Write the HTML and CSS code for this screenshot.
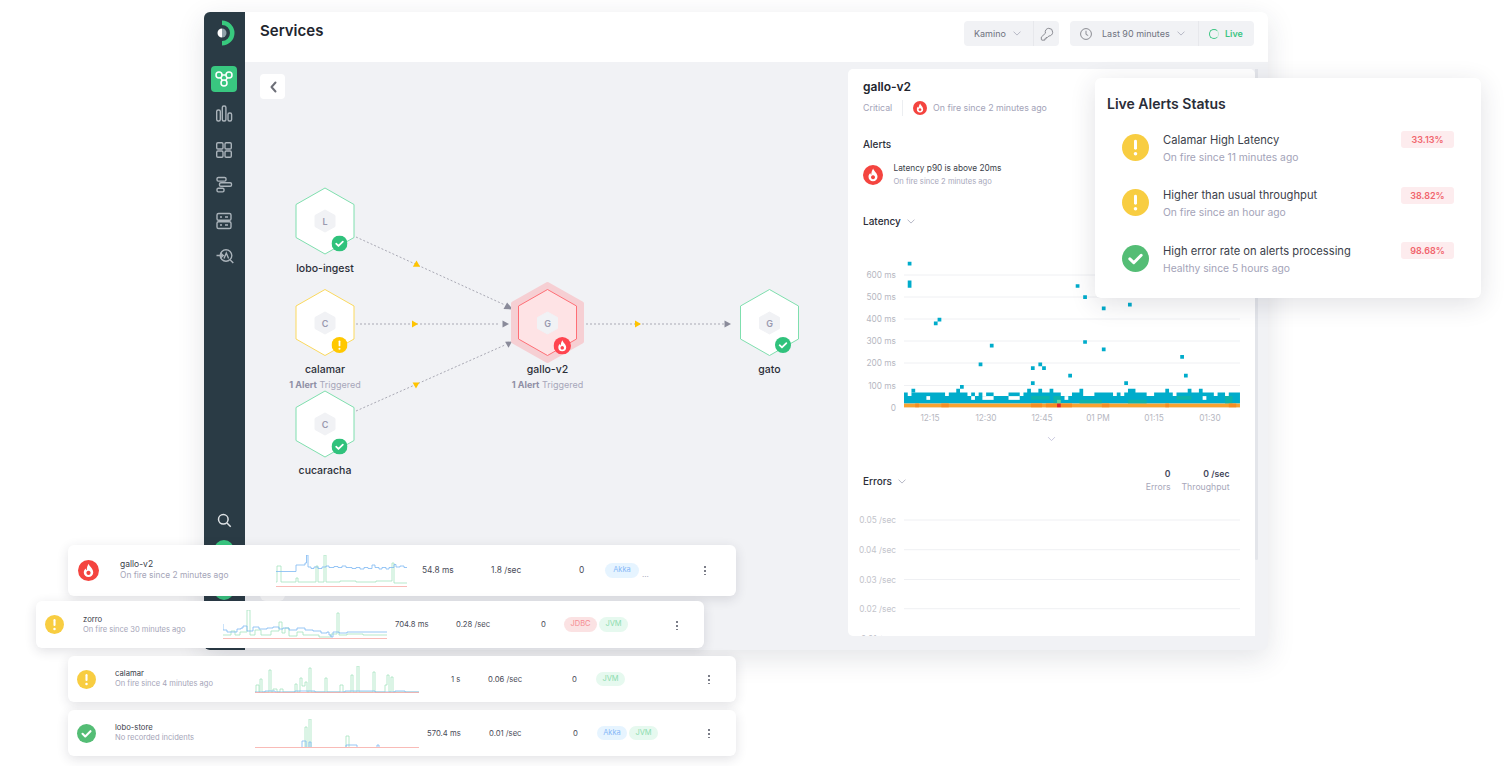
FILE: index.html
```html
<!DOCTYPE html>
<html lang="en">
<head>
<meta charset="utf-8">
<title>Services</title>
<link rel="stylesheet" href="styles.css">
</head>
<body>
<svg class="defs" width="0" height="0" aria-hidden="true">
  <defs>
    <symbol id="i-fire" viewBox="0 0 20 20"><circle cx="10" cy="10" r="10" fill="currentColor"/><path fill="#fff" fill-rule="evenodd" d="M10.200 3.600c.4 2.600 4.300 4.400 4.300 8.200a4.500 4.500 0 0 1-9 0c0-1.800.9-3 1.900-3.800.1 1 .5 1.500 1 1.700-.2-2 .6-4.400 1.800-6.100zM10 10.300a2 2 0 1 0 .01 0z"/></symbol>
    <symbol id="i-warn" viewBox="0 0 20 20"><circle cx="10" cy="10" r="10" fill="currentColor"/><rect x="8.900" y="4.300" width="2.200" height="7.400" rx="1.100" fill="#fff"/><circle cx="10" cy="14.700" r="1.300" fill="#fff"/></symbol>
    <symbol id="i-ok" viewBox="0 0 20 20"><circle cx="10" cy="10" r="10" fill="currentColor"/><path d="M5.800 10.300l2.900 2.800 5.500-5.500" fill="none" stroke="#fff" stroke-width="2.200" stroke-linecap="round" stroke-linejoin="round"/></symbol>
    <symbol id="i-chev" viewBox="0 0 10 6"><path d="M1 1l4 4 4-4" fill="none" stroke="currentColor" stroke-width="1.200" stroke-linecap="round" stroke-linejoin="round"/></symbol>
  </defs>
</svg>

<main class="stage">
  <section class="window">
    <nav class="sidebar">
      <svg class="logo" viewBox="0 0 26 26"><path d="M9 .5a12.500 12.500 0 0 1 0 25v-4.500a8 8 0 0 0 0-16z" fill="#38c97e"/><path d="M9 8.500a4.500 4.500 0 0 0 0 9z" fill="#fff"/><path d="M9 8.500a4.500 4.500 0 0 1 0 9z" fill="#8fa0a8"/></svg>
      <a class="nav-item active"><svg viewBox="0 0 26 26" class="nav-icon white"><circle cx="8" cy="9" r="3"/><circle cx="18" cy="9" r="3"/><circle cx="13" cy="17" r="3"/><path d="M11 9h4M9.500 11.600l2 3M16.500 11.600l-2 3"/></svg></a>
      <a class="nav-item"><svg viewBox="0 0 26 26" class="nav-icon"><rect x="5.700" y="9" width="3.600" height="11" rx="1.500"/><rect x="11.300" y="5" width="3.600" height="15" rx="1.500"/><rect x="17" y="12" width="3.600" height="8" rx="1.500"/></svg></a>
      <a class="nav-item"><svg viewBox="0 0 26 26" class="nav-icon"><rect x="5.700" y="5.700" width="6.300" height="6.300" rx="1.200"/><rect x="14" y="5.700" width="6.300" height="6.300" rx="1.200"/><rect x="5.700" y="14" width="6.300" height="6.300" rx="1.200"/><rect x="14" y="14" width="6.300" height="6.300" rx="1.200"/></svg></a>
      <a class="nav-item"><svg viewBox="0 0 26 26" class="nav-icon"><rect x="6" y="5.500" width="9" height="3.600" rx="1.300"/><rect x="8.500" y="10.700" width="12" height="3.600" rx="1.300"/><rect x="6" y="16.300" width="7" height="3.600" rx="1.300"/></svg></a>
      <a class="nav-item"><svg viewBox="0 0 26 26" class="nav-icon"><rect x="6" y="5.500" width="14" height="6.800" rx="1.600"/><rect x="6" y="13.700" width="14" height="6.800" rx="1.600"/><path d="M9 9h2M14 9h3M9 17h2M14 17h3"/></svg></a>
      <a class="nav-item"><svg viewBox="0 0 26 26" class="nav-icon"><circle cx="15" cy="12.500" r="5.800"/><path d="M19.300 17l3 3M5.500 12.500h7M9.500 10l2.800 2.500-2.800 2.500M13 15.500l2.300-5.500 2.300 5.500"/></svg></a>
      <div class="nav-bottom">
        <a class="nav-item"><svg viewBox="0 0 26 26" class="nav-icon light"><circle cx="12.300" cy="12.300" r="4.800"/><path d="M16 16l3.700 3.700"/></svg></a>
        <span class="avatar"></span>
        <span class="avatar"></span>
      </div>
    </nav>

    <div class="main">
      <header class="topbar">
        <h1 class="page-title">Services</h1>
        <div class="tools">
          <div class="tool-group">
            <span class="tool kamino">Kamino<svg class="chev"><use href="#i-chev"/></svg></span>
            <span class="tool key"><svg class="tool-icon" viewBox="0 0 16 16"><path d="M10 1.500a4.500 4.500 0 0 1 4.500 4.500c0 2.500-2.200 4.500-4.500 4.300L8.500 12H7v1.500H5.500V15h-3.500L1.500 14v-2.500l4.700-4.400C5.200 4 7.500 1.500 10 1.500z"/></svg></span>
          </div>
          <div class="tool-group">
            <span class="tool time"><svg class="tool-icon" viewBox="0 0 16 16"><circle cx="8" cy="8" r="6.200"/><path d="M8 4.300V8.500l2.500 1.200"/></svg>Last 90 minutes<svg class="chev"><use href="#i-chev"/></svg></span>
            <span class="tool live"><span class="live-dot"></span>Live</span>
          </div>
        </div>
      </header>

      <div class="content">
        <div class="graph">
          <button class="back" type="button" aria-label="Back"><svg viewBox="0 0 10 14"><path d="M7.500 2.500L3.500 7l4 4.500" fill="none" stroke="#6d6f78" stroke-width="2" stroke-linecap="round" stroke-linejoin="round"/></svg></button>
          <span class="back-shadow"></span>
          <svg class="graph-map" viewBox="245 69 603 567">
            <g class="edge">
              <path d="M356 237L505 305"/>
              <path d="M356 324H500"/>
              <path d="M356 411L505 345"/>
              <path d="M578 324H726"/>
            </g>
            <g class="arrow-end">
              <path d="M513 309.500l-9.500-.5 3.600-6.500z"/>
              <path d="M509 324l-6.500 3.400v-6.800z"/>
              <path d="M512 341.500l-3.500 6.300-3.400-6z"/>
              <path d="M731 324l-6.500 3.400v-6.800z"/>
            </g>
            <g class="arrow-mid">
              <path d="M416.500 260.500l3.600 6.300h-7.200z"/>
              <path d="M418 324l-6 3.400v-6.800z"/>
              <path d="M416 388.500l-3.400-6h6.800z"/>
              <path d="M641 324l-6 3.400v-6.800z"/>
            </g>

            <g>
              <polygon class="hex ok" points="325,188 354,204.500 354,237.500 325,254 296,237.500 296,204.500"/>
              <polygon class="hex-in" points="325,210 335,215.500 335,226.500 325,232 315,226.500 315,215.500"/>
              <text class="hex-letter" x="325" y="224.500">L</text>
              <use href="#i-ok" class="badge-ok" x="331.500" y="235.500" width="16" height="16"/>
              <text class="node-name" x="325" y="271.500">lobo-ingest</text>
            </g>
            <g>
              <polygon class="hex warn" points="325,289.500 354,306 354,339 325,355.500 296,339 296,306"/>
              <polygon class="hex-in" points="325,312 335,317.500 335,328.500 325,334 315,328.500 315,317.500"/>
              <text class="hex-letter" x="325" y="326.500">C</text>
              <use href="#i-warn" class="badge-warn" x="331.500" y="337" width="16" height="16"/>
              <text class="node-name" x="325" y="372.500">calamar</text>
              <text class="node-sub" x="325" y="388"><tspan class="node-sub-b">1 Alert</tspan> Triggered</text>
            </g>
            <g>
              <polygon class="hex ok" points="325,391 354,407.500 354,440.500 325,457 296,440.500 296,407.500"/>
              <polygon class="hex-in" points="325,413 335,418.500 335,429.500 325,435 315,429.500 315,418.500"/>
              <text class="hex-letter" x="325" y="427.500">C</text>
              <use href="#i-ok" class="badge-ok" x="331.500" y="438.500" width="16" height="16"/>
              <text class="node-name" x="325" y="473.500">cucaracha</text>
            </g>
            <g>
              <polygon class="halo" points="547.500,284 582,303.500 582,341.500 547.500,361 513,341.500 513,303.500"/>
              <polygon class="hex fire" points="547.500,289.500 576.500,306 576.500,339 547.500,355.500 518.500,339 518.500,306"/>
              <polygon class="hex-in" points="547.500,312 557.500,317.500 557.500,328.500 547.500,334 537.500,328.500 537.500,317.500"/>
              <text class="hex-letter" x="547.500" y="326.500">G</text>
              <use href="#i-fire" class="badge-fire" x="553.500" y="337" width="17.500" height="17.500"/>
              <text class="node-name" x="547.500" y="372.500">gallo-v2</text>
              <text class="node-sub" x="547.500" y="388"><tspan class="node-sub-b">1 Alert</tspan> Triggered</text>
            </g>
            <g>
              <polygon class="hex ok" points="769.500,289.500 798.500,306 798.500,339 769.500,355.500 740.500,339 740.500,306"/>
              <polygon class="hex-in" points="769.500,312 779.500,317.500 779.500,328.500 769.500,334 759.500,328.500 759.500,317.500"/>
              <text class="hex-letter" x="769.500" y="326.500">G</text>
              <use href="#i-ok" class="badge-ok" x="775" y="337" width="16" height="16"/>
              <text class="node-name" x="769.500" y="372.500">gato</text>
            </g>
          </svg>
        </div>

        <aside class="panel">
          <h2 class="panel-title">gallo-v2</h2>
          <div class="panel-meta">
            <span class="crit">Critical</span>
            <svg class="ico-14 red"><use href="#i-fire"/></svg>
            <span>On fire since 2 minutes ago</span>
          </div>
          <h3 class="sec-title alerts-title">Alerts</h3>
          <div class="alert-row">
            <svg class="ico-20 red"><use href="#i-fire"/></svg>
            <div>
              <p class="alert-main">Latency p90 is above 20ms</p>
              <p class="alert-sub">On fire since 2 minutes ago</p>
            </div>
          </div>
          <h3 class="sec-title latency-title">Latency<svg class="chev"><use href="#i-chev"/></svg></h3>

          <svg class="chart chart-lat" viewBox="848 258 408 187">
            <g class="grid">
              <path d="M904 275H1240M904 297H1240M904 319H1240M904 341H1240M904 363H1240M904 385.500H1240M904 407.300H1240"/>
            </g>
            <g class="axis-y">
              <text x="896" y="278">600 ms</text><text x="896" y="300">500 ms</text><text x="896" y="322">400 ms</text><text x="896" y="344">300 ms</text><text x="896" y="366">200 ms</text><text x="896" y="389">100 ms</text><text x="896" y="411">0</text>
            </g>
            <g transform="translate(904 258) scale(3.733)">
              <path class="h-teal" d="M0 36h1v1h1v-1h9v1h1v-1h2v-1h1v1h2v1h1v-1h1v1h1v-1h1v1h1v-1h2v1h4v-1h3v1h1v-1h1v-1h1v1h2v-1h1v1h2v-1h1v1h2v1h3v-1h2v-1h1v1h0v1h3v-1h5v1h1v-1h1v1h1v-1h1v-1h2v1h3v1h2v-1h3v-1h1v1h1v1h1v-1h3v-1h1v1h2v-1h1v1h3v1h1v-1h2v1h1v-1h3V39H0z"/>
              <path class="h-green" d="M34 37h5v1h-5zM40 37h2v2h-2zM47 38h6v1h-6zM60 38h5v1h-5zM73 37h4v1h-4zM86 37h2v2h-2z"/>
              <rect class="h-mint" x="41" y="38" width="1" height="1"/>
              <g class="h-white">
                <rect x="6" y="37" width="1" height="1"/><rect x="18" y="37" width="1" height="1"/><rect x="21" y="37" width="3" height="1"/><rect x="28" y="37" width="3" height="1"/><rect x="43" y="37" width="1" height="1"/><rect x="80" y="37" width="1" height="1"/>
              </g>
              <rect class="h-orange" x="0" y="39" width="90" height="1"/>
              <path class="h-deep" d="M3 39h1v1H3zM10 39h2v1h-2zM34 39h3v1h-3zM38 39h3v1h-3zM42 39h3v1h-3zM53 39h2v1h-2zM70 39h1v1h-1zM87 39h2v1h-2z"/>
              <rect class="h-red" x="41" y="39" width="1" height="1"/>
              <path class="h-teal" d="M1 1h1v1H1zM1 6h1v2H1zM8 17h1v1H8zM9 16h1v1H9zM2 35h1v1H2zM15 34h1v1h-1zM20 28h1v1h-1zM23 23h1v1h-1zM34 29h1v1h-1zM36 28h1v1h-1zM37 29h1v1h-1zM34 33h1v1h-1zM44 31h1v1h-1zM46 7h1v1h-1zM48 10h1v1h-1zM48 22h1v1h-1zM53 13h1v1h-1zM53 24h1v1h-1zM59 33h1v1h-1zM60 12h1v1h-1zM74 26h1v1h-1zM75 31h1v1h-1z"/>
            </g>
            <g class="axis-x">
              <text x="930" y="421">12:15</text><text x="986" y="421">12:30</text><text x="1042" y="421">12:45</text><text x="1098" y="421">01 PM</text><text x="1154" y="421">01:15</text><text x="1210" y="421">01:30</text>
            </g>
            <use href="#i-chev" class="chev-lav" x="1047.500" y="436.500" width="8" height="5"/>
          </svg>

          <div class="errors-head">
            <h3 class="sec-title">Errors<svg class="chev"><use href="#i-chev"/></svg></h3>
            <div class="stats">
              <div class="stat"><strong>0</strong><span>Errors</span></div>
              <div class="stat"><strong>0 /sec</strong><span>Throughput</span></div>
            </div>
          </div>

          <svg class="chart chart-err" viewBox="848 505 408 160">
            <g class="grid"><path d="M904 519H1240M904 548.700H1240M904 578.500H1240M904 607.700H1240M904 637H1240"/></g>
            <g class="axis-y faint">
              <text x="896" y="522">0.05 /sec</text><text x="896" y="552">0.04 /sec</text><text x="896" y="582">0.03 /sec</text><text x="896" y="611">0.02 /sec</text><text x="896" y="641">0.01 /sec</text>
            </g>
          </svg>
        </aside>
        <span class="scrollbar"></span>
      </div>
    </div>
  </section>

  <section class="live-card">
    <h2 class="live-title">Live Alerts Status</h2>
    <ul class="live-list">
      <li class="live-item">
        <svg class="ico-27 yellow"><use href="#i-warn"/></svg>
        <div class="live-text"><p class="live-name">Calamar High Latency</p><p class="live-sub">On fire since 11 minutes ago</p></div>
        <span class="pct">33.13%</span>
      </li>
      <li class="live-item">
        <svg class="ico-27 yellow"><use href="#i-warn"/></svg>
        <div class="live-text"><p class="live-name">Higher than usual throughput</p><p class="live-sub">On fire since an hour ago</p></div>
        <span class="pct">38.82%</span>
      </li>
      <li class="live-item">
        <svg class="ico-27 green"><use href="#i-ok"/></svg>
        <div class="live-text"><p class="live-name">High error rate on alerts processing</p><p class="live-sub">Healthy since 5 hours ago</p></div>
        <span class="pct">98.68%</span>
      </li>
    </ul>
  </section>

  <section class="rows">
    <article class="row row-1">
      <svg class="ico-21 red"><use href="#i-fire"/></svg>
      <div><p class="row-name">gallo-v2</p><p class="row-sub">On fire since 2 minutes ago</p></div>
      <svg class="spark spark-1" viewBox="0 0 131 33">
        <path class="s-green" d="M0 27H1V11H5V27H20V23H22V27H40V11H42V27H48V0H50V27H64V26H80V27H100V26H116V8H118V28H131"/>
        <path class="s-blue" d="M0 16.500H20V10H29V8H30.500V0H32V12H35V13.500H38V12H42V13.500H46V12H50V11H53V12.500H58V11.500H62V12.500H66V11H70V12.500H76V13.500H80V12.500H84V14H88V12.500H92V13.500H96V10H99V12.500H103V14H106V12.500H110V14H113V12.500H118V9.500H120V12H124V11H128V12.500H131"/>
        <path class="s-red" d="M0 31.500H131"/>
      </svg>
      <span class="num">54.8 ms</span>
      <span class="num">1.8 /sec</span>
      <span class="num">0</span>
      <div class="tags"><span class="tag akka tag-wide">Akka</span><span class="more">...</span></div>
      <span class="kebab"></span>
    </article>

    <article class="row row-2">
      <svg class="ico-19 yellow"><use href="#i-warn"/></svg>
      <div><p class="row-name">zorro</p><p class="row-sub">On fire since 30 minutes ago</p></div>
      <svg class="spark spark-2" viewBox="0 0 164 29">
        <path class="s-green" d="M0 25H8V21H12V25H17V22H24V0H27V25H32V20H38V25H48V21H56V12H59V23H62V18H66V26H74V22H80V25H96V27H108V24H114V3H116V25H124V24H140V25H164"/>
        <path class="s-blue" d="M0 14V20H4V22H14V19H18V18H20V16H24V21H30V17H36V19H44V18H50V17H56V19H60V18H66V20H74V18H82V20H90V21H98V23H104V22H106V25H108V27H110V22H116V23H124V22H164"/>
        <path class="s-red" d="M0 28.500H164"/>
      </svg>
      <span class="num">704.8 ms</span>
      <span class="num">0.28 /sec</span>
      <span class="num">0</span>
      <div class="tags"><span class="tag jdbc">JDBC</span><span class="tag jvm">JVM</span></div>
      <span class="kebab"></span>
    </article>

    <article class="row row-3">
      <svg class="ico-19 yellow"><use href="#i-warn"/></svg>
      <div><p class="row-name">calamar</p><p class="row-sub">On fire since 4 minutes ago</p></div>
      <svg class="spark spark-3" viewBox="0 0 164 27">
        <path class="s-green" d="M0 26H1V19H4V26H5V13H7V26H14V4H16V26H18V23H22V26H25V23H28V26H40V18H42V26H45V12H47V20H50V16H52V26H54V2H56V26H70V12H72V26H85V19H88V26H96V9H98V26H102V0H104V26H118V6H120V26H130V19H132V9H134V26H136V11H138V26H164"/>
        <path class="s-blue" d="M0 26H10V25H20V26H40V25H60V26H90V25H120V26H140V25H150V26H164"/>
        <path class="s-red" d="M0 26.500H164"/>
      </svg>
      <span class="num">1 s</span>
      <span class="num">0.06 /sec</span>
      <span class="num">0</span>
      <div class="tags"><span class="tag jvm">JVM</span></div>
      <span class="kebab"></span>
    </article>

    <article class="row row-4">
      <svg class="ico-19 green"><use href="#i-ok"/></svg>
      <div><p class="row-name">lobo-store</p><p class="row-sub">No recorded incidents</p></div>
      <svg class="spark spark-4" viewBox="0 0 164 29">
        <path class="s-green" d="M50 28V8H52V28M54 28V0H56V28M91 28V17H94V28"/>
        <path class="s-blue" d="M47 28V22H51V28M54 28V23H56V28M91 28V26H102V28M122 28V26H124V28"/>
        <path class="s-red" d="M0 28.500H164"/>
      </svg>
      <span class="num">570.4 ms</span>
      <span class="num">0.01 /sec</span>
      <span class="num">0</span>
      <div class="tags"><span class="tag akka">Akka</span><span class="tag jvm">JVM</span></div>
      <span class="kebab"></span>
    </article>
  </section>
</main>
</body>
</html>
```

FILE: styles.css
```css
* { box-sizing: border-box; }
html, body { margin: 0; padding: 0; background: #fff; }
body { font-family: Inter, "Noto Sans", sans-serif; color: #23262f; width: 1506px; height: 766px; overflow: hidden; }
p, h1, h2, h3, ul { margin: 0; padding: 0; }
ul { list-style: none; }
.defs { position: absolute; }

.stage { position: relative; width: 1506px; height: 766px; }

/* Window */
.window {
  position: absolute; left: 204px; top: 12px; width: 1064px; height: 638px;
  display: flex; border-radius: 6px; overflow: hidden; background: #f1f2f5;
  box-shadow: 0 8px 28px rgba(40, 46, 66, .13);
}
.sidebar { width: 41px; background: #2a3b45; display: flex; flex-direction: column; align-items: center; padding: 8px 1px 0 0; flex: none; }
.logo { width: 26px; height: 26px; margin-bottom: 20px; margin-left: 3px; display: block; }
.nav-item { width: 26px; height: 26px; display: flex; align-items: center; justify-content: center; margin-bottom: 9.400px; border-radius: 4px; }
.nav-item.active { background: #39c780; }
.nav-icon { width: 26px; height: 26px; fill: none; stroke: #aab3ba; stroke-width: 1.400; }
.nav-icon.white { stroke: #fff; stroke-width: 1.500; }
.nav-icon.light { stroke: #dfe3e6; stroke-width: 1.500; }
.nav-bottom { margin-top: auto; display: flex; flex-direction: column; align-items: center; gap: 20px; padding-bottom: 50px; }
.nav-bottom .nav-item { margin-bottom: -13px; }
.avatar { width: 20px; height: 20px; border-radius: 50%; background: #39c780; display: block; }

.main { flex: 1; display: flex; flex-direction: column; min-width: 0; }
.topbar { height: 50px; background: #fff; display: flex; justify-content: space-between; align-items: flex-start; padding: 9px 14px 0 15px; flex: none; }
.page-title { font-size: 15px; font-weight: 600; line-height: 20px; color: #22252e; }
.tools { display: flex; gap: 11px; }
.tool-group { height: 25px; background: #f1f2f5; border-radius: 4px; display: flex; align-items: center; font-size: 9px; color: #6f7280; }
.tool { display: flex; align-items: center; height: 100%; }
.tool + .tool { border-left: 1px solid #e7e8ec; }
.kamino { width: 69px; padding-left: 10px; gap: 7px; }
.key { width: 26px; justify-content: center; }
.time { width: 128px; padding-left: 9px; }
.time .tool-icon { margin-right: 9px; }
.time .chev { margin-left: 7px; }
.live { width: 56px; padding-left: 10px; gap: 6px; color: #3cc583; font-weight: 600; }
.live-dot { width: 10px; height: 10px; border-radius: 50%; border: 1.400px solid #3cc583; border-right-color: #bdebd2; }
.tool-icon { width: 14px; height: 14px; fill: none; stroke: #85878f; stroke-width: 1.100; }
.chev { width: 8px; height: 5px; color: #b3b5c3; display: block; flex: none; }

.content { flex: 1; display: flex; padding: 7px 10px 14px 0; min-height: 0; position: relative; }
.graph { width: 603px; flex: none; position: relative; }
.graph-map { display: block; width: 603px; height: 567px; }
.back { position: absolute; left: 15px; top: 5px; width: 25px; height: 25px; border: 0; padding: 0; border-radius: 4px; background: #fff; display: flex; align-items: center; justify-content: center; }
.back svg { width: 10px; height: 14px; }
.back-shadow { position: absolute; left: 15px; top: 506px; width: 25px; height: 26px; border-radius: 6px; background: #fff; }

.edge path { fill: none; stroke: #a9a9b4; stroke-width: 1; stroke-dasharray: 2 2; }
.arrow-end { fill: #8a8b9a; }
.arrow-mid { fill: #ffc400; }
.hex { fill: #fff; stroke-width: 1; stroke-linejoin: round; }
.hex.ok { stroke: #7fdfae; }
.hex.warn { stroke: #fbd95e; }
.hex.fire { fill: #fee3e5; stroke: #ff6f76; }
.halo { fill: #f6cfd3; stroke: #f6cfd3; stroke-width: 4; stroke-linejoin: round; }
.hex-in { fill: #f1f2f5; stroke: #f1f2f5; stroke-width: 1; stroke-linejoin: round; }
.hex-letter { font-size: 9px; font-weight: 600; fill: #9a9ab0; text-anchor: middle; }
.node-name { font-size: 10.500px; font-weight: 500; fill: #2b2e38; text-anchor: middle; }
.node-sub { font-size: 9px; fill: #a7a7ba; text-anchor: middle; }
.node-sub-b { font-weight: 700; fill: #8f8fa5; }
.badge-ok { color: #30c27c; }
.badge-warn { color: #ffc800; }
.badge-fire { color: #ff4550; }

/* Detail panel */
.panel { width: 407px; flex: none; background: #fff; border-radius: 5px 5px 0 5px; padding: 10px 25.500px 0 15px; overflow: hidden; }
.panel-title { font-size: 12px; font-weight: 600; line-height: 16px; color: #22252e; }
.panel-meta { display: flex; align-items: center; font-size: 8.800px; line-height: 14px; color: #a3a3b8; margin-top: 5px; }
.crit { width: 40px; height: 16px; line-height: 16px; border-right: 1px solid #eceef1; margin-right: 10px; }
.panel-meta .ico-14 { margin-right: 6px; }
.ico-14 { width: 14px; height: 14px; }
.ico-20 { width: 20px; height: 20px; flex: none; }
.ico-19 { width: 19px; height: 19px; display: block; }
.ico-21 { width: 21px; height: 21px; display: block; }
.ico-27 { width: 27px; height: 27px; flex: none; }
.red { color: #f4443f; }
.yellow { color: #f8cd41; }
.green { color: #54bd75; }
.sec-title { font-size: 10px; font-weight: 500; line-height: 14px; color: #2b2e38; display: flex; align-items: center; gap: 6px; }
.alerts-title { margin-top: 21px; }
.alert-row { display: flex; align-items: center; gap: 10.500px; margin-top: 11px; }
.alert-main { font-size: 8.300px; line-height: 13px; color: #3c3f4a; }
.alert-sub { font-size: 7.600px; line-height: 13px; color: #a8a8bb; }
.latency-title { margin-top: 26px; }
.chart { display: block; width: 408px; margin-left: -15px; }
.chart-lat { height: 187px; margin-top: 30px; }
.chart-err { height: 160px; margin-top: 12px; }
.grid path { fill: none; stroke: #eff0f3; stroke-width: 1; }
.axis-y text { font-size: 8.300px; fill: #b6b7bf; text-anchor: end; }
.axis-y.faint text { fill: #c3c4cb; }
.axis-x text { font-size: 8.300px; fill: #b6b7bf; text-anchor: middle; }
.h-teal { fill: #00accb; }
.h-green { fill: #0db3ab; }
.h-mint { fill: #62d39b; }
.h-white { fill: #fff; }
.h-orange { fill: #f9a22f; }
.h-deep { fill: #f68d23; }
.h-red { fill: #e2232b; }
.chev-lav { color: #c7c6dc; }
.errors-head { display: flex; justify-content: space-between; align-items: center; height: 26px; margin-top: 23px; }
.stats { display: flex; gap: 11px; }
.stat { display: flex; flex-direction: column; align-items: flex-end; font-size: 8.700px; line-height: 13px; color: #a7a7ba; }
.stat strong { font-weight: 600; color: #43465a; }
.scrollbar { width: 3px; height: 491px; background: #e3e5ea; flex: none; border-radius: 0 0 2px 2px; }

/* Live alerts */
.live-card {
  position: absolute; left: 1095px; top: 78px; width: 386px; height: 220px;
  background: #fff; border-radius: 6px; padding: 17px 27px 0 12px;
  box-shadow: 0 6px 26px rgba(40, 46, 66, .14);
}
.live-title { font-size: 14px; font-weight: 600; line-height: 18px; color: #2a2d38; }
.live-list { display: flex; flex-direction: column; margin-top: 19.500px; gap: 14.200px; }
.live-item { display: flex; align-items: flex-start; padding-left: 14.500px; height: 41.500px; }
.live-item .ico-27 { margin-top: 1px; }
.live-text { flex: 1; padding-left: 14.500px; }
.live-name { font-size: 11.200px; line-height: 15px; color: #3c3f4b; }
.live-sub { font-size: 10.300px; line-height: 15px; margin-top: 2px; color: #a3a3b8; }
.pct { width: 53px; height: 17px; margin-top: -1.500px; background: #fdecee; border-radius: 3px; color: #f1646d; font-size: 9px; font-weight: 600; line-height: 17px; text-align: center; }

/* Rows */
.rows { position: absolute; left: 36px; top: 545px; width: 700px; display: flex; flex-direction: column; }
.row { display: grid; align-items: center; width: 668px; background: #fff; border-radius: 6px; box-shadow: 0 3px 12px rgba(40, 46, 66, .14); }
.row-1 { height: 50.500px; margin-left: 32px; padding-left: 10px; grid-template-columns: 42px 156px 146px 69px 88px 26px 98px auto; }
.row-2 { height: 47px; margin-top: 5.500px; padding-left: 9px; grid-template-columns: 38px 140px 172px 61px 85px 23px 111px auto; }
.row-3 { height: 46px; margin-top: 8px; margin-left: 32px; padding-left: 9px; grid-template-columns: 38px 140px 196px 37px 84px 24px 111px auto; }
.row-4 { height: 46px; margin-top: 8px; margin-left: 32px; padding-left: 9px; grid-template-columns: 38px 140px 172px 62px 84px 24px 110px auto; }
.row-name { font-size: 7.700px; line-height: 10px; color: #3b3e4a; }
.row-sub { font-size: 7.550px; line-height: 10px; color: #a5a5b8; }
.row-1 .row-name { font-size: 8.500px; line-height: 11px; }
.row-1 .row-sub { font-size: 8.400px; line-height: 11px; }
.spark { display: block; fill: none; stroke-width: .8; }
.spark-1 { width: 131px; height: 33px; margin-top: 2px; }
.spark-2 { width: 164px; height: 29px; }
.spark-3 { width: 164px; height: 27px; }
.spark-4 { width: 164px; height: 29px; }
.s-blue { stroke: #7fb9f2; }
.s-green { stroke: #a5e3bf; }
.s-red { stroke: #f8aaa5; }
.num { font-size: 7.700px; color: #4a4c58; white-space: nowrap; }
.row-1 .num { font-size: 8.400px; }
.tags { display: flex; gap: 2px; align-items: flex-end; }
.tag { height: 14.500px; line-height: 14.500px; border-radius: 8px; font-size: 7.500px; text-align: center; padding: 0; }
.akka { background: #e6f4ff; color: #86b8f7; width: 30px; }
.tag-wide { width: 34px; height: 15px; }
.jvm { background: #e6f9ef; color: #8cdcae; width: 29px; }
.jdbc { background: #fbe2e3; color: #f58c92; width: 33px; }
.more { font-size: 8px; line-height: 8px; color: #a5a5b8; margin-left: 1px; }
.kebab { width: 4px; height: 10px; justify-self: start; background: radial-gradient(circle, #7b7d88 1px, transparent 1.300px) 0 0 / 4px 4px repeat-y; }
```
